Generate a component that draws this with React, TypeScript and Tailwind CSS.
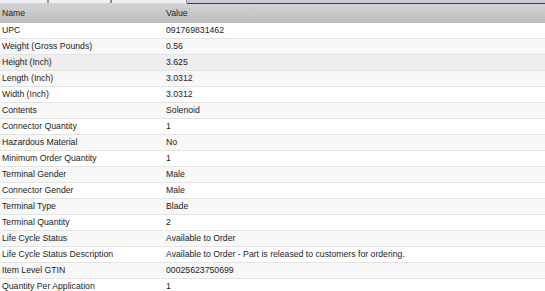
import React from 'react';

const rows: [string, string][] = [
  ['UPC', '091769831462'],
  ['Weight (Gross Pounds)', '0.56'],
  ['Height (Inch)', '3.625'],
  ['Length (Inch)', '3.0312'],
  ['Width (Inch)', '3.0312'],
  ['Contents', 'Solenoid'],
  ['Connector Quantity', '1'],
  ['Hazardous Material', 'No'],
  ['Minimum Order Quantity', '1'],
  ['Terminal Gender', 'Male'],
  ['Connector Gender', 'Male'],
  ['Terminal Type', 'Blade'],
  ['Terminal Quantity', '2'],
  ['Life Cycle Status', 'Available to Order'],
  ['Life Cycle Status Description', 'Available to Order - Part is released to customers for ordering.'],
  ['Item Level GTIN', '00025623750699'],
  ['Quantity Per Application', '1'],
];

const App: React.FC = () => {
  return (
    <div className="w-[545px] h-[291px] overflow-hidden bg-white text-[8.7px] text-[#222] font-['Liberation_Sans',Arial,sans-serif]">
      {/* tab strip */}
      <div className="flex h-[4px]">
        <div className="flex w-[187px] bg-[#efeff1] border-b border-[#d4d4dc]">
          <div className="w-[47px]" />
          <div className="w-[2px] bg-[#8c8c94]" />
          <div className="w-[61px]" />
          <div className="w-[2px] bg-[#8c8c94]" />
          <div className="w-[74px]" />
          <div className="w-[1px] bg-[#8c8c94]" />
        </div>
        <div className="flex-1 bg-[#c9c9d6] border-b border-[#3b3b6b]" />
      </div>

      {/* header */}
      <div className="flex h-[19px] items-center bg-gradient-to-b from-[#d3d3d3] to-[#bdbdbd]">
        <div className="w-[164px] pl-[2px]">Name</div>
        <div className="flex-1 pl-[2px]">Value</div>
      </div>

      {rows.map(([name, value], i) => (
        <div
          key={name}
          className={`flex h-[16px] items-center border-b border-[#e4e4e4] ${
            i === 2 ? 'bg-[#eeeeee]' : i % 2 === 1 ? 'bg-[#f8f8f8]' : 'bg-white'
          }`}
        >
          <div className="w-[164px] pl-[2px] whitespace-nowrap">{name}</div>
          <div className="flex-1 pl-[2px] whitespace-nowrap">{value}</div>
        </div>
      ))}
    </div>
  );
};

export default App;
